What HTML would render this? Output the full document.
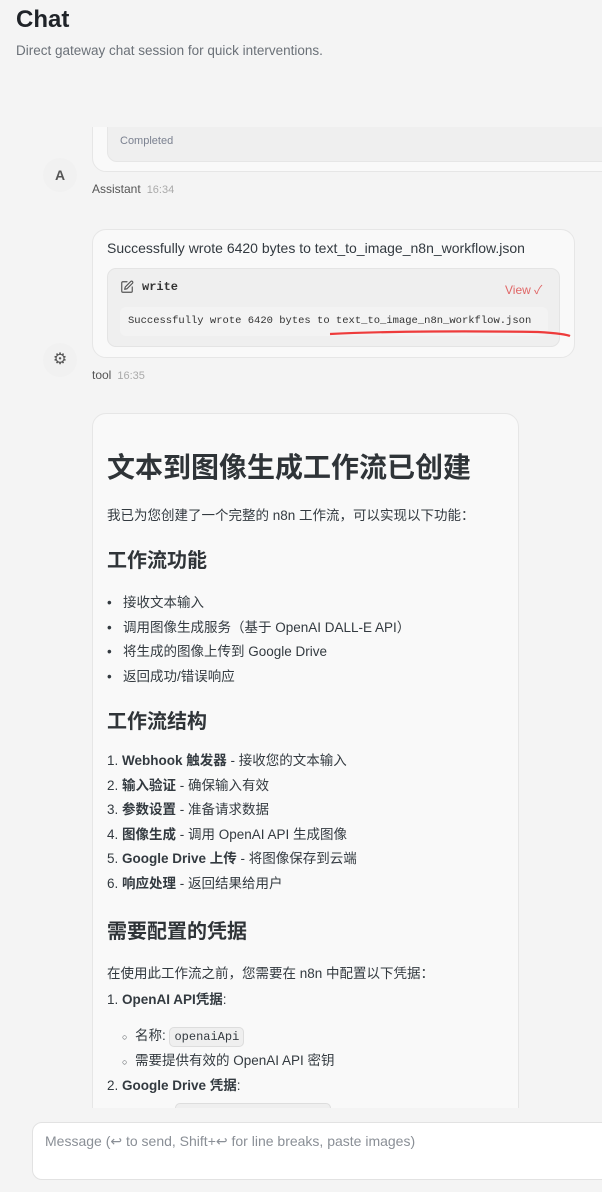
<!DOCTYPE html>
<html><head><meta charset="utf-8"><style>
*{margin:0;padding:0;box-sizing:border-box}
body{width:602px;height:1192px;background:#f4f4f4;font-family:"Liberation Sans","Noto Sans CJK SC",sans-serif;color:#333a40;position:relative;overflow:hidden}
.a{position:absolute;white-space:nowrap}
.mono{font-family:"Liberation Mono","DejaVu Sans Mono",monospace}
#scroll{position:absolute;left:0;top:127px;width:602px;height:981px;overflow:hidden}
.card{position:absolute;background:#f9f9f9;border:1px solid #e6e6e6;border-radius:14px}
.av{position:absolute;width:34px;height:34px;border-radius:50%;background:#f1f1f1;font-size:14px;font-weight:bold;color:#555;text-align:center;line-height:34px}
.meta{font-size:12px;color:#555}
.meta span{color:#aaa;margin-left:6px;font-size:11px}
.md{font-size:13.5px}
.md b{font-weight:bold}
</style></head><body>
<div class="a" style="left:16px;top:6px;font-size:24px;font-weight:bold;color:#1f2328">Chat</div>
<div class="a" style="left:16px;top:43px;font-size:13.5px;color:#6b7178">Direct gateway chat session for quick interventions.</div>

<div id="scroll">
 <div class="card" style="left:92px;top:-30px;width:540px;height:75px"></div>
 <div class="a" style="left:107px;top:-20px;width:520px;height:55px;background:#efefef;border:1px solid #e6e6e6;border-radius:10px"></div>
 <div class="a" style="left:120px;top:8px;font-size:11px;color:#7b8190">Completed</div>
 <div class="av" style="left:43px;top:31px">A</div>
 <div class="a meta" style="left:92px;top:55px">Assistant<span>16:34</span></div>

 <div class="card" style="left:92px;top:102px;width:483px;height:129px"></div>
 <div class="a" style="left:107px;top:113px;font-size:14px;color:#333a40">Successfully wrote 6420 bytes to text_to_image_n8n_workflow.json</div>
 <div class="a" style="left:107px;top:141px;width:453px;height:79px;background:#efefef;border:1px solid #e4e4e4;border-radius:9px"></div>
 <svg class="a" style="left:120px;top:153px" width="14" height="14" viewBox="0 0 24 24" fill="none" stroke="#555" stroke-width="2" stroke-linecap="round" stroke-linejoin="round"><path d="M12 3H5a2 2 0 0 0-2 2v14a2 2 0 0 0 2 2h14a2 2 0 0 0 2-2v-7"/><path d="M18.4 2.6a2 2 0 0 1 3 3L12 15l-4 1 1-4z"/></svg>
 <div class="a mono" style="left:142px;top:153px;font-size:12px;font-weight:bold;color:#333">write</div>
 <div class="a" style="left:505px;top:154px;font-size:12px;color:#e06666">View ✓</div>
 <div class="a" style="left:120px;top:180px;width:428px;height:29px;background:#f3f3f3;border-radius:6px"></div>
 <div class="a mono" style="left:128px;top:188px;font-size:10.5px;color:#333">Successfully wrote 6420 bytes to text_to_image_n8n_workflow.json</div>
 <svg class="a" style="left:328px;top:201px" width="245" height="10"><path d="M2 6 C60 3,150 3,210 4 C230 5,240 7,242 8" stroke="#ee3b3b" stroke-width="2.2" fill="none"/></svg>
 <div class="av" style="left:43px;top:216px;font-size:16px;font-weight:normal">⚙</div>
 <div class="a meta" style="left:92px;top:241px">tool<span>16:35</span></div>

 <div class="card" style="left:92px;top:286px;width:427px;height:760px"></div>
 <div class="a" style="left:107px;top:319px;font-size:28px;font-weight:bold;color:#2f3438">文本到图像生成工作流已创建</div>
 <div class="a md" style="left:107px;top:377px">我已为您创建了一个完整的 n8n 工作流，可以实现以下功能：</div>
 <div class="a" style="left:107px;top:417px;font-size:20px;font-weight:bold;color:#2f3438">工作流功能</div>
 <div class="a md" style="left:107px;top:464px;line-height:24.5px">
  <div>•&nbsp;&nbsp;&nbsp;接收文本输入</div>
  <div>•&nbsp;&nbsp;&nbsp;调用图像生成服务（基于 OpenAI DALL-E API）</div>
  <div>•&nbsp;&nbsp;&nbsp;将生成的图像上传到 Google Drive</div>
  <div>•&nbsp;&nbsp;&nbsp;返回成功/错误响应</div>
 </div>
 <div class="a" style="left:107px;top:578px;font-size:20px;font-weight:bold;color:#2f3438">工作流结构</div>
 <div class="a md" style="left:107px;top:622px;line-height:24.6px">
  <div>1. <b>Webhook 触发器</b> - 接收您的文本输入</div>
  <div>2. <b>输入验证</b> - 确保输入有效</div>
  <div>3. <b>参数设置</b> - 准备请求数据</div>
  <div>4. <b>图像生成</b> - 调用 OpenAI API 生成图像</div>
  <div>5. <b>Google Drive 上传</b> - 将图像保存到云端</div>
  <div>6. <b>响应处理</b> - 返回结果给用户</div>
 </div>
 <div class="a" style="left:107px;top:788px;font-size:20px;font-weight:bold;color:#2f3438">需要配置的凭据</div>
 <div class="a md" style="left:107px;top:835px">在使用此工作流之前，您需要在 n8n 中配置以下凭据：</div>
 <div class="a md" style="left:107px;top:861px"><div>1. <b>OpenAI API凭据</b>:</div></div>
 <div class="a md" style="left:107px;top:897px">&nbsp;&nbsp;&nbsp;&nbsp;<span style="font-size:9px">○</span>&nbsp;&nbsp;名称: <span class="mono" style="font-size:12px;background:#efefef;border:1px solid #ddd;border-radius:5px;padding:2px 4px">openaiApi</span></div>
 <div class="a md" style="left:107px;top:922px">&nbsp;&nbsp;&nbsp;&nbsp;<span style="font-size:9px">○</span>&nbsp;&nbsp;需要提供有效的 OpenAI API 密钥</div>
 <div class="a md" style="left:107px;top:947px">2. <b>Google Drive 凭据</b>:</div>
 <div class="a" style="left:175px;top:976px;width:156px;height:24px;background:#efefef;border:1px solid #ddd;border-radius:5px"></div>
</div>

<div class="a" style="left:32px;top:1122px;width:590px;height:58px;background:#fff;border:1px solid #e2e2e2;border-radius:10px"></div>
<div class="a" style="left:45px;top:1133px;font-size:14px;color:#8a8f96">Message (↩ to send, Shift+↩ for line breaks, paste images)</div>
</body></html>
